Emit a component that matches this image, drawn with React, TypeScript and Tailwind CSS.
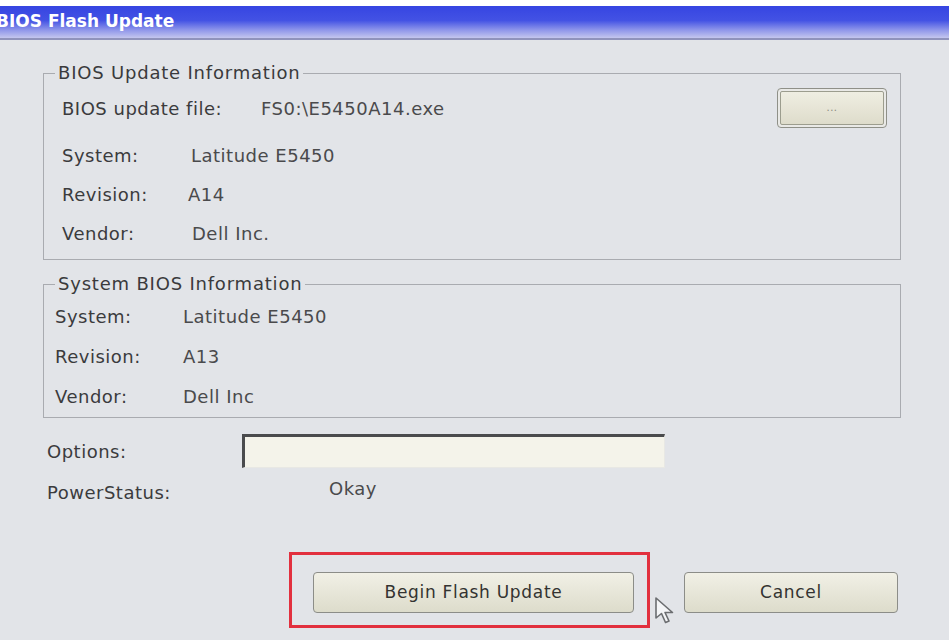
import React from 'react';

const font = { fontFamily: '"DejaVu Sans", Verdana, sans-serif' };

function Row({ label, value, valueX, className }: { label: string; value: string; valueX: string; className: string }) {
  return (
    <div className={`flex items-center ${className}`}>
      <span className={`text-[#3b3b3d] shrink-0 ${valueX}`}>{label}</span>
      <span className="text-[#4a4a4c]">{value}</span>
    </div>
  );
}

function CursorArrow() {
  return (
    <svg width="28" height="30" viewBox="0 0 28 30" className="absolute left-[653px] top-[596px]">
      <path
        d="M3 2 L3 22 L8.5 17.5 L12.5 26.5 L16 25 L12 16.5 L19.5 16.5 Z"
        fill="#f4f5f7"
        stroke="#6b6d70"
        strokeWidth="1.6"
        strokeLinejoin="round"
      />
    </svg>
  );
}

export default function App() {
  return (
    <div
      className="relative w-[949px] h-[640px] overflow-hidden bg-[#e2e4e8] text-[18px] tracking-[0.5px]"
      style={font}
    >
      {/* window title */}
      <div className="h-[6px] bg-white" />
      <div className="h-[34px] flex items-center border-b-2 border-[#9093bc] bg-[linear-gradient(to_bottom,#3645e2_0%,#4352e4_45%,#8f96ea_75%,#c4c6ee_100%)]">
        <span className="-ml-[4px] text-white font-bold text-[17px] tracking-normal whitespace-nowrap">BIOS Flash Update</span>
      </div>

      <div className="pl-[43px] pr-[48px]">
        {/* BIOS update information */}
        <fieldset className="mt-[23px] border border-[#a9abb0]">
          <legend className="ml-[11px] px-[3px] leading-[20px] tracking-[0.8px] text-[#3a3a3c]">BIOS Update Information</legend>
          <div className="pt-[4px] pl-[18px] pr-[13px]">
            <div className="flex items-center h-[42px]">
              <span className="w-[199px] text-[#3b3b3d]">BIOS update file:</span>
              <span className="text-[#4a4a4c]">FS0:\E5450A14.exe</span>
              <button className="ml-auto w-[110px] h-[40px] rounded-[4px] border border-[#8f9088] p-[2px] bg-[#e9e9e6]">
                <div className="h-full rounded-[2px] border border-[#9c9d8e] bg-[linear-gradient(to_bottom,#efeee2,#dedccb)] flex items-center justify-center text-[10px] text-[#8a8a80] leading-none">
                  ...
                </div>
              </button>
            </div>
            <Row label="System:" value="Latitude E5450" valueX="w-[129px]" className="h-[52px]" />
            <Row label="Revision:" value="A14" valueX="w-[126px]" className="h-[26px]" />
            <Row label="Vendor:" value="Dell Inc." valueX="w-[130px]" className="h-[52px]" />
          </div>
        </fieldset>

        {/* System BIOS information */}
        <fieldset className="mt-[14px] border border-[#a9abb0]">
          <legend className="ml-[11px] px-[3px] leading-[20px] tracking-[0.8px] text-[#3a3a3c]">System BIOS Information</legend>
          <div className="pt-[2px] pb-[1px] pl-[11px]">
            <Row label="System:" value="Latitude E5450" valueX="w-[128px]" className="h-[40px]" />
            <Row label="Revision:" value="A13" valueX="w-[128px]" className="h-[40px]" />
            <Row label="Vendor:" value="Dell Inc" valueX="w-[128px]" className="h-[40px]" />
          </div>
        </fieldset>

        {/* options / power */}
        <div className="mt-[16px] pl-[4px] flex items-center">
          <span className="w-[195px] text-[#3b3b3d]">Options:</span>
          <div className="w-[423px] h-[34px] bg-[#f4f3ea] border-t-[3px] border-l-[3px] border-r border-b border-t-[#4a4b4d] border-l-[#4a4b4d] border-r-[#e8e8e4] border-b-[#e8e8e4]" />
        </div>
        <div className="mt-[8px] pl-[4px] flex items-center h-[32px]">
          <span className="w-[282px] text-[#3b3b3d]">PowerStatus:</span>
          <span className="text-[#4a4a4c] -mt-[8px]">Okay</span>
        </div>

        {/* buttons */}
        <div className="mt-[44px] ml-[246px] flex items-start">
          <div className="border-[3px] border-[#e2303e] pt-[17px] pl-[21px] pr-[13px] pb-[12px]">
            <button className="w-[321px] h-[41px] rounded-[4px] border border-[#8c8d88] bg-[linear-gradient(to_bottom,#f1f0e6,#dddccb)] text-[17px] tracking-[0.7px] text-[#333331]">
              Begin Flash Update
            </button>
          </div>
          <button className="ml-[34px] mt-[20px] w-[214px] h-[41px] rounded-[4px] border border-[#8c8d88] bg-[linear-gradient(to_bottom,#f1f0e6,#dddccb)] text-[17px] tracking-[0.7px] text-[#333331]">
            Cancel
          </button>
        </div>
      </div>

      <CursorArrow />
    </div>
  );
}
